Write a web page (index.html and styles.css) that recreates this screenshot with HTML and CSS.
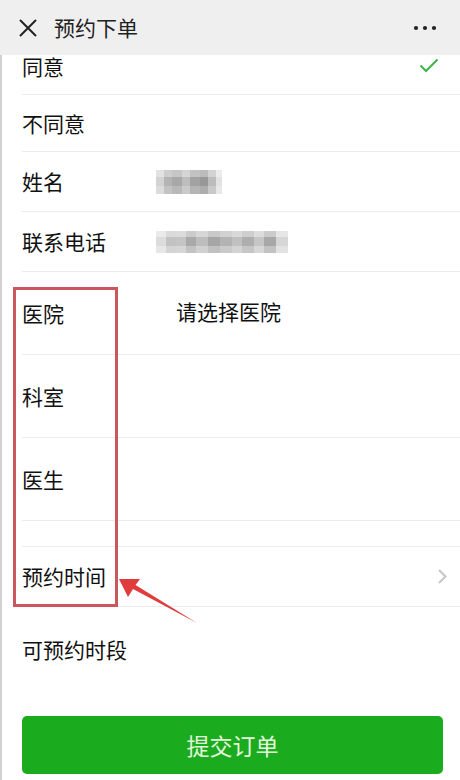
FILE: index.html
```html
<!DOCTYPE html>
<html lang="zh-CN">
<head>
    <meta charset="UTF-8">
    <meta name="viewport" content="width=device-width, initial-scale=1.0">
    <title>预约下单</title>
    <link rel="stylesheet" href="styles.css">
</head>
<body>

<div class="top-bar">
    <svg class="close-icon" width="18" height="18" viewBox="0 0 18 18">
        <path d="M1 1 L17 17 M17 1 L1 17" stroke="#222" stroke-width="2" fill="none"/>
    </svg>
    <span class="top-title">预约下单</span>
    <svg class="more-icon" width="24" height="6" viewBox="0 0 24 6">
        <circle cx="3" cy="3" r="2.1" fill="#222"/>
        <circle cx="12" cy="3" r="2.1" fill="#222"/>
        <circle cx="21" cy="3" r="2.1" fill="#222"/>
    </svg>
</div>

<div class="form-list">
    <div class="row h57">
        <span class="label">同意</span>
        <svg class="check-icon" width="20" height="16" viewBox="0 0 20 16">
            <path d="M1.5 7.5 L7 13 L18.5 1.5" stroke="#3db447" stroke-width="2" fill="none"/>
        </svg>
    </div>
    <div class="row h57"><span class="label">不同意</span></div>
    <div class="row h60">
        <span class="label">姓名</span>
        <span class="mosaic mosaic-name"></span>
    </div>
    <div class="row h60">
        <span class="label">联系电话</span>
        <span class="mosaic mosaic-phone"></span>
    </div>
    <div class="row h83 top">
        <span class="label">医院</span>
        <span class="value placeholder">请选择医院</span>
    </div>
    <div class="row h83"><span class="label">科室</span></div>
    <div class="row h83"><span class="label">医生</span></div>
    <div class="row h26"></div>
    <div class="row h60 link">
        <span class="label">预约时间</span>
        <svg class="chevron" width="9" height="15" viewBox="0 0 9 15">
            <path d="M1 1 L7.5 7.5 L1 14" stroke="#c6c6c6" stroke-width="2" fill="none"/>
        </svg>
    </div>
    <div class="row h84 last"><span class="label">可预约时段</span></div>

    <button class="submit-btn">提交订单</button>
</div>

<!-- annotation drawn over the screenshot -->
<svg class="annotation" width="460" height="780" viewBox="0 0 460 780">
    <rect x="14.5" y="288.5" width="102" height="317" fill="none" stroke="#c9575b" stroke-width="3"/>
    <polygon points="119,579 140,579 135.5,585 197,623 133,589 128,597" fill="#e03b3d"/>
</svg>

</body>
</html>
```

FILE: styles.css
```css
/* Base */
body {
    margin: 0;
    height: 780px;
    overflow: hidden;
    background: #ffffff;
    border-left: 2px solid #d2d2d2;
    font-family: "Noto Sans CJK SC", "Noto Sans", sans-serif;
    color: #111;
}

/* Top bar (stays over the scrolled list) */
.top-bar {
    position: fixed;
    top: 0;
    left: 0;
    right: 0;
    height: 55px;
    background: #efefef;
    display: flex;
    align-items: center;
    padding: 0 23px 0 19px;
    z-index: 5;
}

.close-icon {
    margin-right: 17px;
}

.top-title {
    font-size: 21px;
    color: #222;
    line-height: 1;
}

.more-icon {
    margin-left: auto;
}

/* Form list */
.form-list {
    padding-top: 38px;
}

.row {
    display: flex;
    align-items: center;
    margin-left: 20px;
    padding-right: 21px;
    border-bottom: 1px solid #ececec;
    box-sizing: border-box;
    font-size: 21px;
    line-height: 1;
}

.h57 { height: 57px; }
.h60 { height: 60px; }
.h83 { height: 83px; }
.h26 { height: 26px; }
.h84 { height: 84px; }

.row.last {
    border-bottom: none;
}

.row.link {
    padding-right: 13px;
}

.label {
    width: 134px;
    flex-shrink: 0;
}

.value.placeholder {
    padding-left: 20px;
    margin-top: -3px;
}

.check-icon,
.chevron {
    margin-left: auto;
}

/* Masked personal data */
.mosaic {
    display: block;
    height: 24px;
}

.mosaic-name {
    width: 66px;
    background:
        linear-gradient(180deg, rgba(255,255,255,.35) 0 7px, rgba(255,255,255,0) 7px 16px, rgba(255,255,255,.2) 16px),
        linear-gradient(90deg, #d3d3d3 0 8px, #b4b4b4 8px 16px, #a8a8a8 16px 26px, #bdbdbd 26px 34px,
            #a2a2a2 34px 44px, #989898 44px 52px, #bcbcbc 52px 60px, #e2e2e2 60px 66px);
}

.mosaic-phone {
    width: 132px;
    height: 22px;
    background:
        linear-gradient(180deg, rgba(255,255,255,.4) 0 6px, rgba(255,255,255,0) 6px 15px, rgba(255,255,255,.3) 15px),
        linear-gradient(90deg, #dcdcdc 0 10px, #c2c2c2 10px 20px, #c4c4c4 20px 30px, #a9a9a9 30px 40px,
            #bdbdbd 40px 52px, #a6a6a6 52px 64px, #b3b3b3 64px 76px, #c0c0c0 76px 86px,
            #aeaeae 86px 98px, #c6c6c6 98px 108px, #a8a8a8 108px 120px, #d6d6d6 120px 132px);
}

/* Submit button */
.submit-btn {
    display: block;
    width: 421px;
    height: 58px;
    margin: 25px 0 0 20px;
    border: none;
    border-radius: 5px;
    background: #1bab1f;
    color: #e4f7dc;
    font-family: "Noto Sans CJK SC", "Noto Sans", sans-serif;
    font-size: 23px;
    cursor: pointer;
}

/* Red markup over the screen */
.annotation {
    position: absolute;
    top: 0;
    left: 0;
    pointer-events: none;
    z-index: 6;
}
```
